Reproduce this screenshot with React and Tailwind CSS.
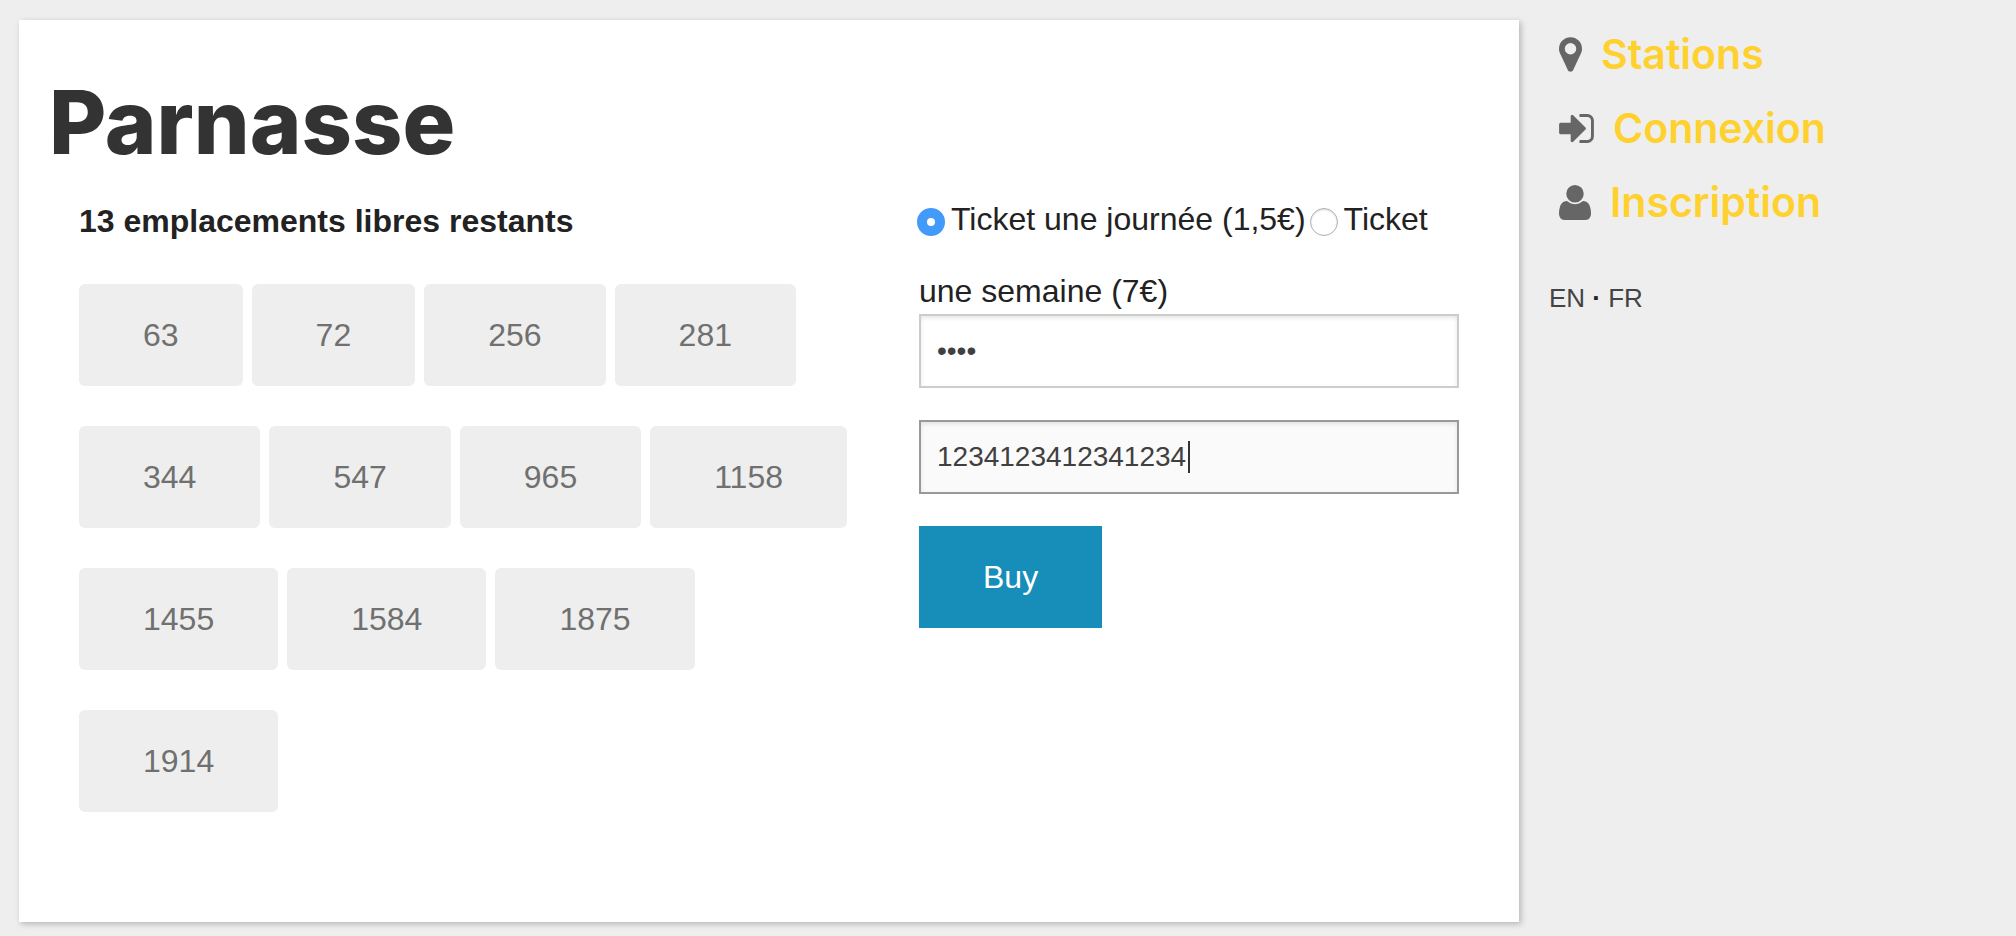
import React, { useState } from "react";

const PLACES = [63, 72, 256, 281, 344, 547, 965, 1158, 1455, 1584, 1875, 1914];

const NAV = [
  {
    label: "Stations",
    viewBox: "384 128 1024 1536",
    size: "w-[23px] h-[35px]",
    path: "M1152 640q0-106-75-181t-181-75-181 75-75 181 75 181 181 75 181-75 75-181zm256 0q0 109-33 179l-364 774q-16 33-47.5 52t-67.5 19-67.5-19-46.5-52l-365-774q-33-70-33-179 0-212 150-362t362-150 362 150 150 362z",
  },
  {
    label: "Connexion",
    viewBox: "128 256 1536 1280",
    size: "w-[35px] h-[29px]",
    path: "M1312 896q0 26-19 45l-544 544q-19 19-45 19t-45-19-19-45v-288h-448q-26 0-45-19t-19-45v-384q0-26 19-45t45-19h448v-288q0-26 19-45t45-19 45 19l544 544q19 19 19 45zm352-352v704q0 119-84.5 203.5t-203.5 84.5h-320q-13 0-22.5-9.5t-9.5-22.5q0-4-1-20t-.5-26.5 3-23.5 10-19.5 20.5-6.5h320q66 0 113-47t47-113v-704q0-66-47-113t-113-47h-312l-11.5-1-11.5-3-8-5.5-7-9-2-13.5q0-4-1-20t-.5-26.5 3-23.5 10-19.5 20.5-6.5h320q119 0 203.5 84.5t84.5 203.5z",
  },
  {
    label: "Inscription",
    viewBox: "192 128 1408 1536",
    size: "w-[32px] h-[35px]",
    path: "M1600 1405q0 120-73 189.5t-194 69.5h-874q-121 0-194-69.5t-73-189.5q0-53 3.5-103.5t14-109 26.5-108.5 43-97.5 62-81 85.5-53.5 111.5-20q9 0 42 21.5t74.5 48 108 48 133.5 21.5 133.5-21.5 108-48 74.5-48 42-21.5q61 0 111.5 20t85.5 53.5 62 81 43 97.5 26.5 108.5 14 109 3.5 103.5zm-320-893q0 159-112.5 271.5t-271.5 112.5-271.5-112.5-112.5-271.5 112.5-271.5 271.5-112.5 271.5 112.5 112.5 271.5z",
  },
];

function Radio({ checked, onChange, value }) {
  return (
    <input
      type="radio"
      name="ticket"
      value={value}
      checked={checked}
      onChange={onChange}
      className="mr-[6px] -ml-[2px] inline-block size-7 appearance-none rounded-full border border-[#b0b0b0] bg-white align-[-6px] shadow-[inset_0_1px_2px_rgba(0,0,0,0.15)] checked:border-[10px] checked:border-[#429bfb] checked:shadow-none"
    />
  );
}

const FIELD =
  "block h-[74px] w-full border-2 px-4 text-[28px] text-[#404040] shadow-[inset_0_2px_4px_rgba(0,0,0,0.1)] outline-none";

export default function App() {
  const [ticket, setTicket] = useState("day");
  const [pin, setPin] = useState("1234");
  const [card, setCard] = useState("1234123412341234");

  return (
    <div className="flex min-h-screen items-start bg-[#eeeeee] pt-5 pb-[14px] pl-[19px] font-['Liberation_Sans',Arial,sans-serif] text-[32px] text-[#222222]">
      <main className="min-w-0 flex-1 bg-white px-[30px] pt-[46px] pb-[70px] shadow-[2px_2px_6px_rgba(0,0,0,0.24)]">
        <h1 className="font-['Inter',sans-serif] text-[88px] leading-[112px] font-extrabold text-[#333333]">
          Parnasse
        </h1>
        <div className="grid grid-cols-12">
          <section className="col-span-7 px-[30px] pt-[19px]">
            <h2 className="text-[32px] leading-[48px] font-bold">13 emplacements libres restants</h2>
            <div className="mt-[39px] mb-10 flex flex-wrap gap-x-[9px] gap-y-10">
              {PLACES.map((place) => (
                <button
                  key={place}
                  type="button"
                  className="rounded-md bg-[#eeeeee] px-16 py-8 leading-[38px] text-[#707070]"
                >
                  {place}
                </button>
              ))}
            </div>
          </section>
          <form className="col-span-5 px-[30px]" onSubmit={(e) => e.preventDefault()}>
            <div className="-mb-[13px] pt-[5px] leading-[72px]">
              <label>
                <Radio value="day" checked={ticket === "day"} onChange={() => setTicket("day")} />
                Ticket une journée (1,5€)
              </label>
              <label className="ml-[6px]">
                <Radio value="week" checked={ticket === "week"} onChange={() => setTicket("week")} />
                Ticket une semaine (7€)
              </label>
            </div>
            <input
              type="password"
              aria-label="Code"
              value={pin}
              onChange={(e) => setPin(e.target.value)}
              className={`${FIELD} relative border-[#cccccc] bg-white`}
            />
            <div className="relative mt-8">
              <input
                type="text"
                aria-label="Carte"
                value={card}
                onChange={(e) => setCard(e.target.value)}
                className={`${FIELD} border-[#999999] bg-[#fafafa]`}
              />
              <span className="absolute top-[21px] left-[269px] h-8 w-[2px] bg-[#333333]" />
            </div>
            <button
              type="submit"
              className="mt-8 bg-[#178db9] px-16 py-8 leading-[38px] text-white"
            >
              Buy
            </button>
          </form>
        </div>
      </main>
      <aside className="-mt-[3px] w-[497px] shrink-0 pl-[30px]">
        <nav className="flex flex-col pl-[10px]">
          {NAV.map((item) => (
            <a
              key={item.label}
              href="#"
              className="flex items-center gap-[19px] font-['Inter',sans-serif] text-[41px] leading-[74px] font-semibold text-[#ffd12f]"
            >
              <svg viewBox={item.viewBox} className={`${item.size} fill-[#666666]`} aria-hidden="true">
                <path d={item.path} />
              </svg>
              {item.label}
            </a>
          ))}
        </nav>
        <div className="mt-[42px] text-[26px] leading-[34px]">
          <a href="#" className="text-[#444444]">EN</a>
          <span className="font-bold">{" · "}</span>
          <a href="#" className="text-[#444444]">FR</a>
        </div>
      </aside>
    </div>
  );
}
